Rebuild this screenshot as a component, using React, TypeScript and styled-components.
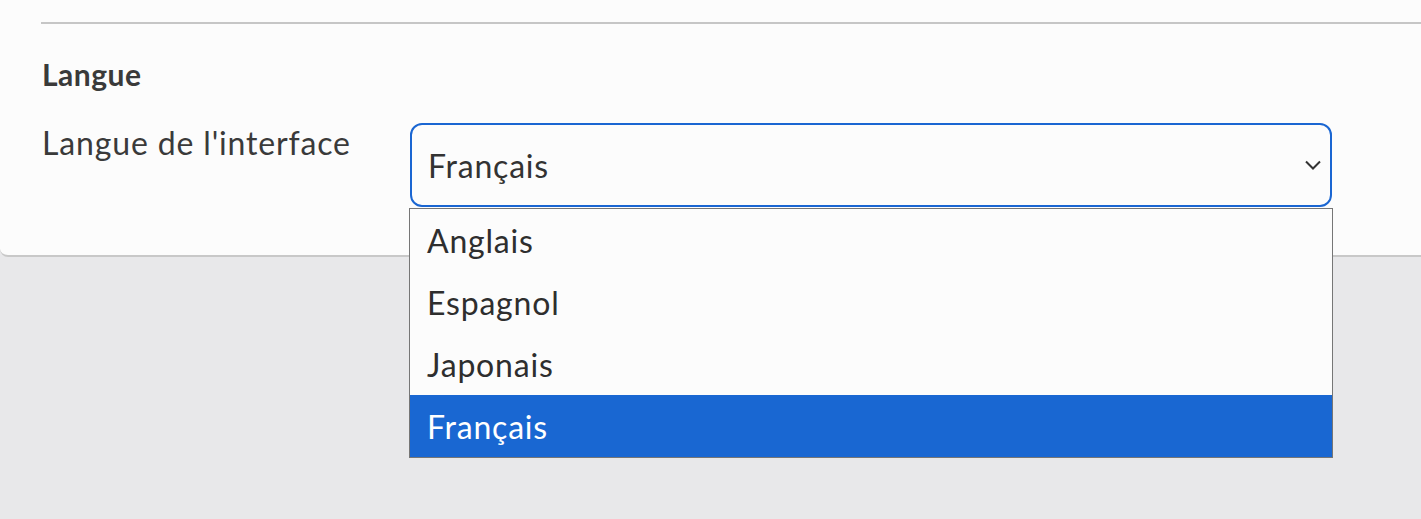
import { FC } from "react";
import styled, { createGlobalStyle } from "styled-components";

const GlobalStyle = createGlobalStyle`
  html, body {
    margin: 0;
    padding: 0;
    background: #e8e8ea;
    font-family: Lato, "Liberation Sans", sans-serif;
    color: #333;
    overflow: hidden;
  }
`;

const Page = styled.div`
  width: 1421px;
  height: 519px;
  background: #e8e8ea;
`;

const Card = styled.section`
  width: 1440px;
  height: 255px;
  background: #fcfcfc;
  border-bottom: 2px solid #c8c8c8;
  border-bottom-left-radius: 8px;
  padding: 0 0 0 42px;
  box-sizing: content-box;

  hr {
    margin: 0;
    margin-left: -1px;
    padding-top: 22px;
    border: none;
    border-bottom: 2px solid #c6c6c6;
  }
`;

const Title = styled.h2`
  margin: 0;
  padding-top: 33px;
  font-size: 30px;
  line-height: 34px;
  font-weight: 700;
  letter-spacing: 0.5px;
  color: #3a3a3a;
`;

const Row = styled.div`
  display: flex;
  margin-top: 32px;
`;

const Label = styled.label`
  width: 368px;
  font-size: 32px;
  line-height: 40px;
  letter-spacing: 0.85px;
  color: #3a3a3a;
`;

const SelectWrap = styled.div`
  position: relative;
  width: 922px;
`;

const SelectBox = styled.div`
  height: 84px;
  box-sizing: border-box;
  border: 2px solid #1a66d2;
  border-radius: 12px;
  display: flex;
  align-items: center;
  justify-content: space-between;
  padding: 0 7px 0 16px;
  font-size: 32px;
  letter-spacing: 0.8px;
  color: #333;
`;

const Chevron = styled.svg`
  width: 20px;
  height: 20px;
  color: #333;
`;

const Menu = styled.ul`
  position: absolute;
  left: -1px;
  top: 85px;
  width: 922px;
  margin: 0;
  padding: 0;
  list-style: none;
  background: #fcfcfc;
  border: 1px solid #767676;
`;

const Option = styled.li<{ $selected?: boolean }>`
  height: 62px;
  display: flex;
  align-items: center;
  padding-left: 17px;
  font-size: 32px;
  letter-spacing: 0.8px;
  color: ${(p) => (p.$selected ? "#fff" : "#2e2e2e")};
  background: ${(p) => (p.$selected ? "#1967d2" : "transparent")};
`;

const options = ["Anglais", "Espagnol", "Japonais", "Français"];

const App: FC = () => {
  return (
    <Page>
      <GlobalStyle />
      <Card>
        <hr />
        <Title>Langue</Title>
        <Row>
          <Label>Langue de l'interface</Label>
          <SelectWrap>
            <SelectBox>
              <span>Français</span>
              <Chevron viewBox="0 0 20 20" fill="none">
                <path d="M3 6.5l7 7 7-7" stroke="currentColor" strokeWidth="2" />
              </Chevron>
            </SelectBox>
            <Menu>
              {options.map((o) => (
                <Option key={o} $selected={o === "Français"}>
                  {o}
                </Option>
              ))}
            </Menu>
          </SelectWrap>
        </Row>
      </Card>
    </Page>
  );
};

export default App;
